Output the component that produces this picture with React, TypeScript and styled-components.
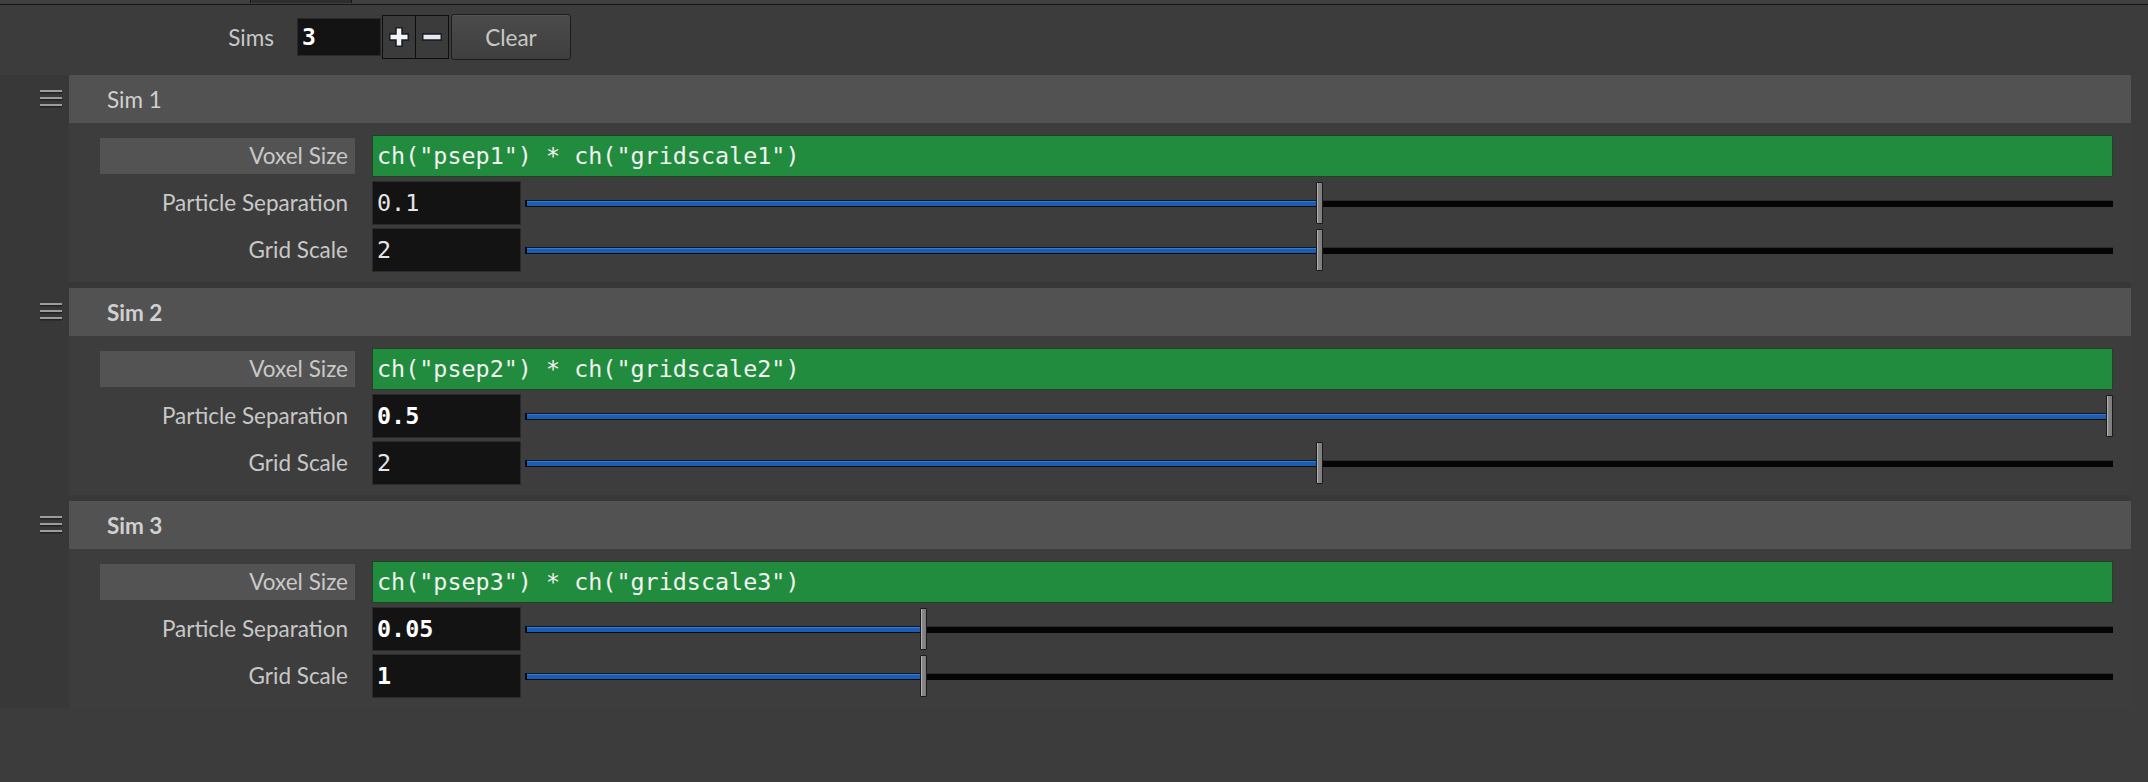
import React from "react";
import styled, { createGlobalStyle, css } from "styled-components";

const Global = createGlobalStyle`
  html, body { margin: 0; padding: 0; background: #3c3c3c; }
  body { width: 2148px; height: 782px; overflow: hidden; font-family: Lato, "Open Sans", sans-serif; }
  * { box-sizing: border-box; }
`;

const Page = styled.div`
  width: 2148px;
  height: 782px;
  background: #3c3c3c;
  display: flex;
  flex-direction: column;
`;

const TopStrip = styled.div`
  height: 5px;
  background: #3f3f3f;
  border-bottom: 1px solid #151515;
  display: flex;
`;

const Tab = styled.div`
  margin-left: 250px;
  width: 102px;
  height: 3px;
  background: #2e2e2e;
  border-left: 1px solid #151515;
  border-right: 1px solid #151515;
`;

const Toolbar = styled.div`
  height: 64px;
  display: flex;
  align-items: center;
  padding-left: 214px;
`;

const ToolLabel = styled.div`
  width: 60px;
  text-align: right;
  color: #c8c8c8;
  font-size: 22.5px;
  margin-right: 23px;
`;

const CountInput = styled.div`
  width: 84px;
  height: 38px;
  background: #131313;
  border: 1px solid #2a2a2a;
  color: #ffffff;
  font-family: "DejaVu Sans Mono", monospace;
  font-weight: bold;
  font-size: 23px;
  line-height: 36px;
  padding-left: 4px;
  margin-right: 1px;
`;

const StepGroup = styled.div`
  width: 67px;
  height: 44px;
  border: 1px solid #0e0e0e;
  background: #3b3b3b;
  display: grid;
  grid-template-columns: 1fr 1fr;
  margin-right: 2px;
`;

const StepButton = styled.div<{ $divider?: boolean }>`
  display: flex;
  align-items: center;
  justify-content: center;
  ${(p) =>
    p.$divider &&
    css`
      border-right: 1px solid #0e0e0e;
    `}
`;

const ClearButton = styled.div`
  width: 120px;
  height: 46px;
  border: 1px solid #1c1c1c;
  border-radius: 3px;
  background: linear-gradient(#4b4b4b, #3f3f3f);
  box-shadow: inset 0 1px 0 #555;
  color: #c8c8c8;
  font-size: 22.5px;
  display: flex;
  align-items: center;
  justify-content: center;
`;

const InstanceList = styled.div`
  margin-top: 6px;
  margin-right: 17px;
  background: #383838;
  display: flex;
  flex-direction: column;
  gap: 6px;
`;

const Instance = styled.div`
  display: grid;
  grid-template-columns: 69px 1fr;
`;

const Handle = styled.div`
  padding: 15px 0 0 40px;
`;

const Panel = styled.div`
  background: #3d3d3d;
`;

const Header = styled.div<{ $bold?: boolean }>`
  height: 48px;
  background: #525252;
  display: flex;
  align-items: center;
  padding-left: 38px;
  color: #d0d0d0;
  font-size: 22.5px;
  font-weight: ${(p) => (p.$bold ? 700 : 400)};
`;

const Body = styled.div`
  padding: 11px 18px 10px 31px;
  display: grid;
  row-gap: 3px;
`;

const ParmRow = styled.div`
  height: 44px;
  display: grid;
  grid-template-columns: 255px 1fr;
  column-gap: 17px;
  align-items: center;
`;

const ParmLabel = styled.div<{ $highlight?: boolean }>`
  height: 36px;
  line-height: 36px;
  text-align: right;
  padding-right: 7px;
  color: #c8c8c8;
  font-size: 22.5px;
  background: ${(p) => (p.$highlight ? "#535353" : "transparent")};
`;

const ExprField = styled.div`
  height: 42px;
  background: #228c3e;
  border: 1px solid #1b4525;
  color: #f2f2f2;
  font-family: "DejaVu Sans Mono", monospace;
  font-size: 23.4px;
  line-height: 40px;
  padding-left: 4px;
  white-space: pre;
`;

const NumberRow = styled.div`
  height: 44px;
  display: flex;
  align-items: center;
  gap: 4px;
`;

const ValueInput = styled.div<{ $bold?: boolean }>`
  width: 149px;
  height: 44px;
  flex: none;
  background: #131313;
  border: 1px solid #2b2b2b;
  color: ${(p) => (p.$bold ? "#ffffff" : "#e6e6e6")};
  font-family: "DejaVu Sans Mono", monospace;
  font-size: 23.4px;
  font-weight: ${(p) => (p.$bold ? 700 : 400)};
  line-height: 42px;
  padding-left: 4px;
`;

const Slider = styled.div`
  flex: 1;
  height: 44px;
  position: relative;
  display: flex;
  align-items: center;
`;

const Track = styled.div`
  flex: 1;
  height: 7px;
  display: flex;
  border-left: 2px solid #0c0c0c;
`;

const Fill = styled.div`
  height: 7px;
  background: #1a5db3;
  border-top: 1px solid #0b1a2e;
  border-bottom: 1px solid #0b0b0b;
  box-shadow: inset 0 1px 0 #3a78c8;
`;

const Rest = styled.div`
  flex: 1;
  height: 7px;
  background: #050505;
  border-top: 1px solid #2c2c2c;
`;

const Thumb = styled.div`
  position: absolute;
  top: 1px;
  width: 7px;
  height: 42px;
  background: linear-gradient(90deg, #b0b0b0 0, #b0b0b0 1px, #888 1px, #7c7c7c 100%);
  border: 1px solid #1a1a1a;
  border-radius: 1px;
`;

const TRACK_W = 1588;
const THUMB_W = 7;

function ParmSlider({ value, max }: { value: number; max: number }) {
  const f = Math.max(0, Math.min(1, value / max));
  const left = f * (TRACK_W - THUMB_W);
  return (
    <Slider>
      <Track>
        <Fill style={{ width: `${f * 100}%` }} />
        <Rest />
      </Track>
      <Thumb style={{ left: `${left}px` }} />
    </Slider>
  );
}

function Hamburger() {
  return (
    <svg width="22" height="18" viewBox="0 0 22 18">
      {[0, 7, 14].map((y) => (
        <g key={y}>
          <rect x="0" y={y} width="22" height="2" fill="#9c9c9c" />
          <rect x="0" y={y + 2} width="22" height="1.5" fill="#222" />
        </g>
      ))}
    </svg>
  );
}

function PlusIcon() {
  return (
    <svg width="22" height="24" viewBox="0 0 22 24">
      <path d="M11 2 V22 M1 12 H21" stroke="#1a1f2a" strokeWidth="8" />
      <path d="M11 3.5 V20.5 M2.5 12 H19.5" stroke="#f4f4f4" strokeWidth="4.5" />
    </svg>
  );
}

function MinusIcon() {
  return (
    <svg width="22" height="12" viewBox="0 0 22 12">
      <path d="M1 6 H21" stroke="#1a1f2a" strokeWidth="8" />
      <path d="M2.5 6 H19.5" stroke="#e8e8e8" strokeWidth="4.5" />
    </svg>
  );
}

type Sim = {
  n: number;
  bold: boolean;
  psep: number;
  psepBold: boolean;
  grid: number;
  gridBold: boolean;
};

const sims: Sim[] = [
  { n: 1, bold: false, psep: 0.1, psepBold: false, grid: 2, gridBold: false },
  { n: 2, bold: true, psep: 0.5, psepBold: true, grid: 2, gridBold: false },
  { n: 3, bold: true, psep: 0.05, psepBold: true, grid: 1, gridBold: true },
];

export default function App() {
  return (
    <Page>
      <Global />
      <TopStrip>
        <Tab />
      </TopStrip>
      <Toolbar>
        <ToolLabel>Sims</ToolLabel>
        <CountInput>3</CountInput>
        <StepGroup>
          <StepButton $divider>
            <PlusIcon />
          </StepButton>
          <StepButton>
            <MinusIcon />
          </StepButton>
        </StepGroup>
        <ClearButton>Clear</ClearButton>
      </Toolbar>
      <InstanceList>
        {sims.map((s) => (
          <Instance key={s.n}>
            <Handle>
              <Hamburger />
            </Handle>
            <Panel>
              <Header $bold={s.bold}>Sim {s.n}</Header>
              <Body>
                <ParmRow>
                  <ParmLabel $highlight>Voxel Size</ParmLabel>
                  <ExprField>{`ch("psep${s.n}") * ch("gridscale${s.n}")`}</ExprField>
                </ParmRow>
                <ParmRow>
                  <ParmLabel>Particle Separation</ParmLabel>
                  <NumberRow>
                    <ValueInput $bold={s.psepBold}>{s.psep}</ValueInput>
                    <ParmSlider value={s.psep} max={0.2} />
                  </NumberRow>
                </ParmRow>
                <ParmRow>
                  <ParmLabel>Grid Scale</ParmLabel>
                  <NumberRow>
                    <ValueInput $bold={s.gridBold}>{s.grid}</ValueInput>
                    <ParmSlider value={s.grid} max={4} />
                  </NumberRow>
                </ParmRow>
              </Body>
            </Panel>
          </Instance>
        ))}
      </InstanceList>
    </Page>
  );
}
